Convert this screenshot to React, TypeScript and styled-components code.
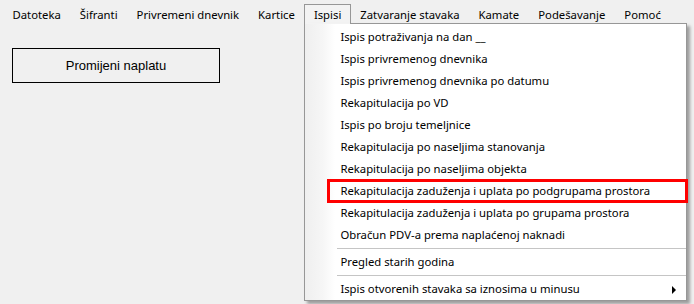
import React from 'react';
import styled, { createGlobalStyle } from 'styled-components';

const Global = createGlobalStyle`
  html, body { margin: 0; padding: 0; background: #f0f0f0; }
  body {
    font-family: "Noto Sans", "Segoe UI", sans-serif;
    font-size: 11.3px;
    color: #000;
  }
`;

const Window = styled.div`
  width: 694px;
  height: 304px;
  overflow: hidden;
  background: #f0f0f0;
`;

const MenuBar = styled.nav`
  display: flex;
  align-items: flex-start;
  height: 23px;
  box-sizing: border-box;
  padding: 4px 0 0 3px;
`;

const MenuItem = styled.div<{ $open?: boolean }>`
  position: relative;
  height: 19px;
  box-sizing: border-box;
  padding: 1px 8.5px 0;
  line-height: 17px;
  white-space: nowrap;
  border: 1px solid ${(p) => (p.$open ? '#979797' : 'transparent')};
  border-bottom: none;
  background: ${(p) => (p.$open ? '#f3f3f3' : 'transparent')};
  z-index: ${(p) => (p.$open ? 3 : 'auto')};

  &::after {
    content: '';
    display: ${(p) => (p.$open ? 'block' : 'none')};
    position: absolute;
    left: 0;
    right: 0;
    bottom: -1px;
    height: 1px;
    background: #f3f3f3;
    z-index: 2;
  }
`;

const Dropdown = styled.div`
  position: absolute;
  top: 18px;
  left: -1px;
  width: 383px;
  box-sizing: border-box;
  border: 1px solid #979797;
  background: linear-gradient(to right, #efefef 0, #f6f6f6 18px, #ffffff 30px);
  padding: 2px 0 0;
  box-shadow: 3px 3px 3px rgba(0, 0, 0, 0.35);
  z-index: 1;
`;

const DropItem = styled.div`
  position: relative;
  height: 22px;
  line-height: 22px;
  padding-left: 35px;
  white-space: nowrap;
`;

const Highlight = styled.span`
  position: absolute;
  left: 22px;
  right: -2px;
  top: -1px;
  bottom: -1px;
  border: 3px solid #ff0000;
  z-index: 4;
  pointer-events: none;
`;

const Separator = styled.div`
  height: 5px;
  display: flex;
  align-items: center;
  padding-left: 32px;

  &::after {
    content: '';
    flex: 1;
    height: 1px;
    background: #c5c5c5;
  }
`;

const SubArrow = styled.span`
  position: absolute;
  right: 10px;
  top: 8px;
  width: 0;
  height: 0;
  border-left: 4px solid #000;
  border-top: 4px solid transparent;
  border-bottom: 4px solid transparent;
`;

const ActionButton = styled.button`
  display: block;
  margin: 25px 0 0 12px;
  width: 208px;
  height: 35px;
  padding: 0;
  border: 1px solid #000;
  background: #f0f0f0;
  font-family: "Liberation Sans", Arial, sans-serif;
  font-size: 13px;
  color: #000;
`;

const menus = [
  'Datoteka',
  'Šifranti',
  'Privremeni dnevnik',
  'Kartice',
  'Ispisi',
  'Zatvaranje stavaka',
  'Kamate',
  'Podešavanje',
  'Pomoć',
];

type Entry =
  | { kind: 'item'; label: string; highlight?: boolean; sub?: boolean }
  | { kind: 'sep' };

const entries: Entry[] = [
  { kind: 'item', label: 'Ispis potraživanja na dan __' },
  { kind: 'item', label: 'Ispis privremenog dnevnika' },
  { kind: 'item', label: 'Ispis privremenog dnevnika po datumu' },
  { kind: 'item', label: 'Rekapitulacija po VD' },
  { kind: 'item', label: 'Ispis po broju temeljnice' },
  { kind: 'item', label: 'Rekapitulacija po naseljima stanovanja' },
  { kind: 'item', label: 'Rekapitulacija po naseljima objekta' },
  { kind: 'item', label: 'Rekapitulacija zaduženja i uplata po podgrupama prostora', highlight: true },
  { kind: 'item', label: 'Rekapitulacija zaduženja i uplata po grupama prostora' },
  { kind: 'item', label: 'Obračun PDV-a prema naplaćenoj naknadi' },
  { kind: 'sep' },
  { kind: 'item', label: 'Pregled starih godina' },
  { kind: 'sep' },
  { kind: 'item', label: 'Ispis otvorenih stavaka sa iznosima u minusu', sub: true },
];

export default function App() {
  return (
    <Window>
      <Global />
      <MenuBar>
        {menus.map((m) =>
          m === 'Ispisi' ? (
            <MenuItem key={m} $open>
              {m}
              <Dropdown>
                {entries.map((e, i) =>
                  e.kind === 'sep' ? (
                    <Separator key={i} />
                  ) : (
                    <DropItem key={i}>
                      {e.label}
                      {e.highlight && <Highlight />}
                      {e.sub && <SubArrow />}
                    </DropItem>
                  )
                )}
              </Dropdown>
            </MenuItem>
          ) : (
            <MenuItem key={m}>{m}</MenuItem>
          )
        )}
      </MenuBar>
      <ActionButton>Promijeni naplatu</ActionButton>
    </Window>
  );
}
